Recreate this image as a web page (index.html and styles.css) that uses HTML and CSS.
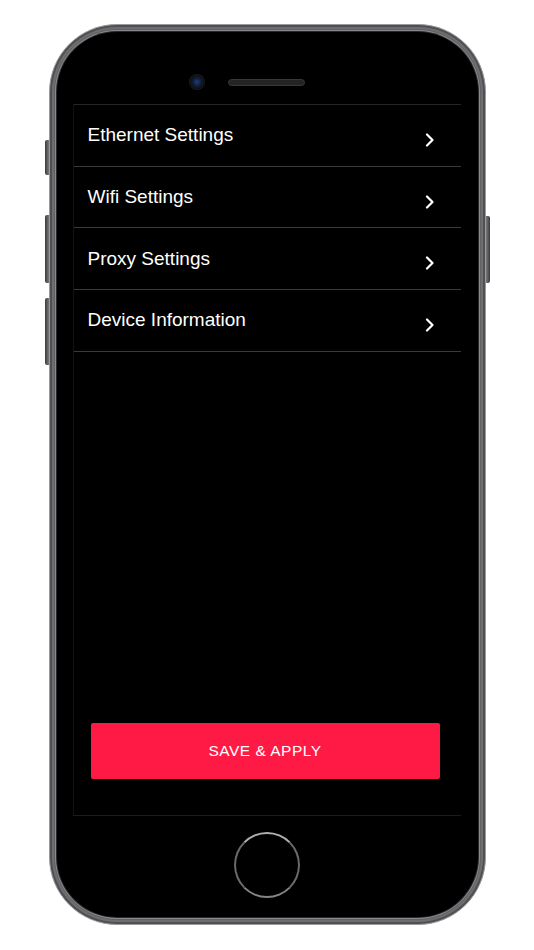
FILE: index.html
```html
<!DOCTYPE html>
<html lang="en">
<head>
    <meta charset="UTF-8">
    <meta name="viewport" content="width=device-width, initial-scale=1.0">
    <title>Settings</title>
    <link rel="stylesheet" href="styles.css">
</head>
<body>
    <div class="phone">
        <span class="side-btn mute"></span>
        <span class="side-btn vol-up"></span>
        <span class="side-btn vol-down"></span>
        <span class="side-btn power"></span>

        <div class="face">
            <div class="top">
                <div class="camera"></div>
                <div class="speaker"></div>
            </div>

            <div class="screen">
                <ul class="menu">
                    <li class="menu-item">
                        <span class="label">Ethernet Settings</span>
                        <svg class="chevron" viewBox="0 0 10 14"><path d="M2 1.5 L7.5 7 L2 12.5"/></svg>
                    </li>
                    <li class="menu-item">
                        <span class="label">Wifi Settings</span>
                        <svg class="chevron" viewBox="0 0 10 14"><path d="M2 1.5 L7.5 7 L2 12.5"/></svg>
                    </li>
                    <li class="menu-item">
                        <span class="label">Proxy Settings</span>
                        <svg class="chevron" viewBox="0 0 10 14"><path d="M2 1.5 L7.5 7 L2 12.5"/></svg>
                    </li>
                    <li class="menu-item">
                        <span class="label">Device Information</span>
                        <svg class="chevron" viewBox="0 0 10 14"><path d="M2 1.5 L7.5 7 L2 12.5"/></svg>
                    </li>
                </ul>

                <button class="save-btn">SAVE &amp; APPLY</button>
            </div>

            <div class="bottom">
                <div class="home-btn"></div>
            </div>
        </div>
    </div>
</body>
</html>
```

FILE: styles.css
```css
:root {
    --font: "Liberation Sans", Arial, sans-serif;
    --frame: #616164;
    --frame-light: #9a9a9d;
    --line: #3a3a3c;
    --accent: #ff1945;
}
* {
    box-sizing: border-box;
}
body {
    margin: 0;
    background-color: #ffffff;
    font-family: var(--font);
    display: flex;
    justify-content: center;
    padding-top: 24px;
}
.phone {
    position: relative;
    width: 437px;
    height: 901px;
    padding: 7px;
    border-radius: 68px;
    background-color: var(--frame);
    border: 1px solid var(--frame-light);
    box-shadow: inset 0 0 0 2px #505053, inset 0 0 0 4px #6e6e71;
}
.side-btn {
    position: absolute;
    width: 4px;
    background: linear-gradient(to right, #3a3a3c, #7a7a7d);
    border-radius: 2px 0 0 2px;
}
.mute { left: -5px; top: 115px; height: 35px; }
.vol-up { left: -5px; top: 190px; height: 68px; }
.vol-down { left: -5px; top: 273px; height: 67px; }
.power {
    right: -5px;
    top: 191px;
    height: 67px;
    border-radius: 0 2px 2px 0;
    background: linear-gradient(to left, #3a3a3c, #7a7a7d);
}
.face {
    height: 100%;
    border-radius: 60px;
    background-color: #000;
    box-shadow: 0 0 0 1px #2a2a2c, 0 0 0 2px #8a8a8d;
    padding: 0 17px 0 16px;
    display: flex;
    flex-direction: column;
}
.top {
    height: 72px;
    padding-top: 43px;
    display: grid;
    grid-template-columns: 1fr auto 1fr;
    align-items: start;
}
.camera {
    justify-self: end;
    width: 14px;
    height: 14px;
    margin-right: 24px;
    border-radius: 50%;
    background: radial-gradient(circle, #1d3f7a 0, #0e1a33 45%, #111 70%);
    box-shadow: 0 0 0 1px #1b1b1d;
}
.speaker {
    width: 77px;
    height: 7px;
    margin-top: 4px;
    border-radius: 4px;
    background-color: #242426;
    border: 1px solid #38383a;
}
.screen {
    height: 712px;
    border-left: 1px solid #121212;
    border-bottom: 1px solid #1c1c1e;
    display: flex;
    flex-direction: column;
}
.menu {
    list-style: none;
    margin: 0;
    padding: 0;
    border-top: 1px solid #262628;
}
.menu-item {
    height: 61.7px;
    padding: 0 26px 0 14px;
    display: flex;
    align-items: center;
    justify-content: space-between;
    border-bottom: 1px solid var(--line);
}
.label {
    color: #ffffff;
    font-size: 19px;
}
.chevron {
    width: 10px;
    height: 14px;
    margin-top: 9px;
    fill: none;
    stroke: #ffffff;
    stroke-width: 2.2;
    stroke-linecap: round;
    stroke-linejoin: round;
}
.save-btn {
    margin: auto 0 36px 17px;
    width: 349px;
    height: 56px;
    border: none;
    border-radius: 2px;
    background-color: var(--accent);
    color: #ffffff;
    font-family: var(--font);
    font-size: 15.5px;
    letter-spacing: 0.5px;
}
.bottom {
    flex: 1;
    display: flex;
    justify-content: center;
    padding-top: 16px;
}
.home-btn {
    width: 66px;
    height: 66px;
    border-radius: 50%;
    border: 2px solid #6a6a6d;
    border-top-color: #b0b0b3;
    border-bottom-color: #858588;
    background-color: #000;
}
```
